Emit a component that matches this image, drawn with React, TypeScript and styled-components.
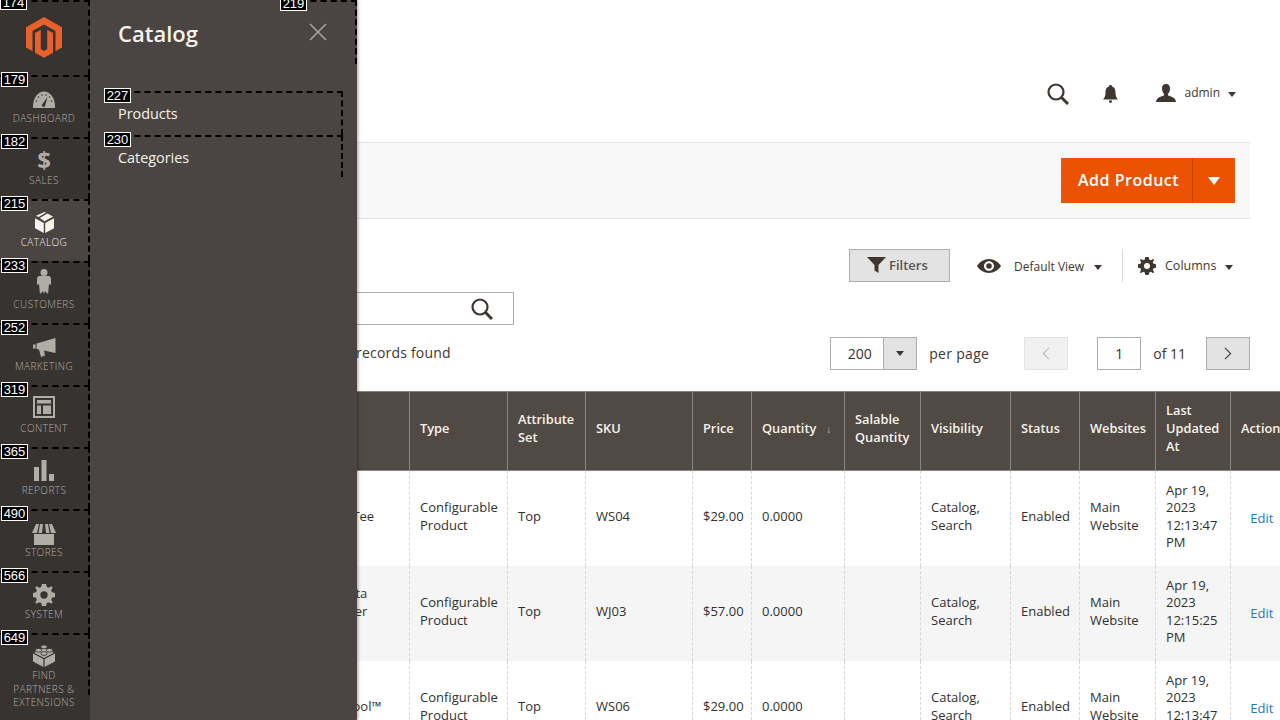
import React from "react";
import styled, { createGlobalStyle } from "styled-components";

const Global = createGlobalStyle`
  html, body { margin: 0; padding: 0; overflow: hidden; background: #fff; }
  * { box-sizing: border-box; }
  body { font-family: "Open Sans", "Liberation Sans", sans-serif; color: #303030; }
`;

const Root = styled.div`
  position: relative;
  display: flex;
  width: 1280px;
  height: 720px;
  overflow: hidden;
  background: #fff;
`;

const Nav = styled.nav`
  position: relative;
  z-index: 3;
  flex: none;
  width: 90px;
  margin-right: -2px;
  height: 720px;
  overflow: hidden;
  background: #373330;
`;

const Tag = styled.span<{ $left?: number; $top?: number }>`
  position: absolute;
  z-index: 5;
  left: ${(p) => p.$left ?? 0}px;
  top: ${(p) => p.$top ?? -5}px;
  width: 27px;
  height: 15px;
  border: 1px solid #fff;
  background: #000;
  color: #fff;
  font: 13px/13px "Liberation Sans", Arial, sans-serif;
  text-align: center;
`;

const LogoCell = styled.div`
  position: relative;
  height: 75px;
  padding-top: 15px;
  border-top: 2px dashed #000;
  border-right: 2px dashed #000;
  display: flex;
  justify-content: center;
  align-items: flex-start;
`;

const NavItem = styled.a<{ $active?: boolean }>`
  position: relative;
  display: flex;
  flex-direction: column;
  align-items: center;
  height: 62px;
  padding-top: 9px;
  border-top: 2px dashed #000;
  border-right: 2px dashed #000;
  background: ${(p) => (p.$active ? "#4a4542" : "transparent")};
  color: ${(p) => (p.$active ? "#f7f3eb" : "#b0aca6")};
`;

const NavIcon = styled.span<{ $shift?: number }>`
  display: flex;
  align-items: center;
  justify-content: center;
  height: 24px;
  color: inherit;
  transform: translateY(${(p) => p.$shift ?? 0}px);
`;

const Dollar = styled.span`
  font: 700 24px/24px "Open Sans", sans-serif;
`;

const NavLabel = styled.span`
  margin-top: 2px;
  max-width: 68px;
  font-size: 10px;
  font-weight: 300;
  line-height: 13.5px;
  letter-spacing: 0.45px;
  text-transform: uppercase;
  text-align: center;
  color: inherit;
`;

const Flyout = styled.aside`
  position: absolute;
  z-index: 2;
  left: 88px;
  top: 0;
  width: 269px;
  height: 720px;
  background: #4a4542;
  box-shadow: 1px 0 3px rgba(0, 0, 0, 0.35);
`;

const FlyTitle = styled.h2`
  margin: 0;
  padding: 18px 0 0 30px;
  height: 91px;
  font-size: 22px;
  line-height: 30px;
  font-weight: 600;
  color: #f7f3eb;
`;

const CloseBox = styled.div`
  position: absolute;
  right: 0;
  top: 0;
  width: 77px;
  height: 64px;
  border-top: 2px dashed #000;
  border-right: 2px dashed #000;
  display: flex;
  align-items: flex-start;
  justify-content: center;
  padding-top: 20px;
  color: #aaa6a0;
`;

const FlyList = styled.div`
  margin-left: 16px;
  width: 239px;
`;

const FlyLink = styled.a`
  position: relative;
  display: block;
  height: 44px;
  padding: 11px 0 0 14px;
  border-top: 2px dashed #000;
  border-right: 2px dashed #000;
  font-size: 14.4px;
  line-height: 20px;
  color: #f7f3eb;
  &:last-child {
    height: 42px;
  }
`;

const Main = styled.main`
  flex: none;
  width: 1162px;
`;

const TopBar = styled.header`
  height: 142px;
  display: flex;
  justify-content: flex-end;
  align-items: center;
  padding: 44px 14px 0 0;
  color: #41362f;
`;

const TopIcon = styled.span<{ $gap: number }>`
  display: flex;
  padding-top: 2px;
  margin-right: ${(p) => p.$gap}px;
`;

const UserName = styled.span`
  margin-left: 8px;
  font-size: 12px;
  line-height: 18px;
  color: #41362f;
`;

const Caret = styled.span<{ $ml?: number; $mt?: number }>`
  display: inline-block;
  margin-left: ${(p) => p.$ml ?? 8}px;
  margin-top: ${(p) => p.$mt ?? 0}px;
  width: 0;
  height: 0;
  border-left: 4px solid transparent;
  border-right: 4px solid transparent;
  border-top: 5px solid #41362f;
`;

const ActionBand = styled.section`
  height: 77px;
  padding: 15px 15px 0 0;
  display: flex;
  justify-content: flex-end;
  background: #f8f8f8;
  border-top: 1px solid #e3e3e3;
  border-bottom: 1px solid #e3e3e3;
`;

const AddButton = styled.div`
  display: flex;
  width: 174px;
  height: 45px;
  background: #eb5202;
  color: #fff;
`;

const AddLabel = styled.span`
  width: 132px;
  padding-left: 17px;
  border-right: 1px solid #c64600;
  font-size: 16px;
  font-weight: 600;
  letter-spacing: 0.5px;
  line-height: 44px;
  white-space: nowrap;
`;

const AddArrow = styled.span`
  flex: 1;
  display: flex;
  align-items: center;
  justify-content: center;
  &::after {
    content: "";
    border-left: 6px solid transparent;
    border-right: 6px solid transparent;
    border-top: 8px solid #fff;
  }
`;

const Tools = styled.div`
  padding: 30px 0 0 30px;
`;

const ToolRow = styled.div`
  display: flex;
  justify-content: flex-end;
  align-items: center;
  height: 33px;
`;

const FilterBtn = styled.div`
  width: 101px;
  height: 33px;
  display: flex;
  align-items: center;
  padding: 0 0 1px 17px;
  gap: 3px;
  background: #e3e3e3;
  border: 1px solid #adadad;
  color: #5c534c;
  font-size: 13px;
  font-weight: 600;
`;

const ViewSwitch = styled.div`
  width: 173px;
  display: flex;
  align-items: center;
  padding-left: 27px;
  color: #41362f;
  font-size: 12px;
  border-right: 1px solid #d9d9d9;
  height: 33px;
`;

const ViewText = styled.span`
  margin: 2px 0 0 13px;
`;

const ColumnsSwitch = styled.div`
  width: 127px;
  display: flex;
  align-items: center;
  padding-left: 15px;
  color: #41362f;
  font-size: 12.5px;
`;

const ColText = styled.span`
  margin-left: 9px;
`;

const SearchBox = styled.div`
  width: 396px;
  height: 33px;
  margin-top: 10px;
  border: 1px solid #adadad;
  display: flex;
  justify-content: flex-end;
  align-items: center;
  padding-right: 20px;
  color: #41362f;
`;

const PagerRow = styled.div`
  display: flex;
  align-items: center;
  height: 33px;
  margin-top: 12px;
`;

const Records = styled.span`
  margin-left: 238px;
  font-size: 14px;
  letter-spacing: 0.2px;
  position: relative;
  top: -1px;
  color: #41362f;
`;

const Select = styled.div`
  margin-left: auto;
  width: 87px;
  height: 33px;
  display: flex;
  border: 1px solid #adadad;
`;

const SelectValue = styled.span`
  flex: 1;
  text-align: center;
  padding-left: 5px;
  font-size: 14px;
  line-height: 31px;
`;

const SelectArrow = styled.span`
  width: 33px;
  background: #e3e3e3;
  border-left: 1px solid #adadad;
  display: flex;
  align-items: center;
  justify-content: center;
`;

const PerPage = styled.span`
  margin: 0 35px 0 12px;
  font-size: 14px;
  letter-spacing: 0.3px;
  color: #41362f;
`;

const PageBtn = styled.span<{ $off?: boolean }>`
  width: 44px;
  height: 33px;
  display: flex;
  align-items: center;
  justify-content: center;
  background: ${(p) => (p.$off ? "#f0f0f0" : "#e3e3e3")};
  border: 1px solid ${(p) => (p.$off ? "#e3e3e3" : "#adadad")};
  color: ${(p) => (p.$off ? "#c2c2c2" : "#514943")};
`;

const PageInput = styled.span`
  margin-left: 29px;
  width: 44px;
  height: 33px;
  border: 1px solid #adadad;
  text-align: center;
  font-size: 14px;
  line-height: 31px;
`;

const PageOf = styled.span`
  margin: 0 20px 0 12px;
  font-size: 14px;
  color: #41362f;
`;

const Table = styled.table`
  margin: 21px 0 0 217px;
  width: 989px;
  table-layout: fixed;
  border-collapse: collapse;
  font-size: 13px;
  line-height: 17.5px;
`;

const Th = styled.th`
  padding: 9px 10px 15px;
  height: 79px;
  background: #514943;
  border: 1px solid #8a837f;
  border-right: none;
  color: #f7f3eb;
  font-weight: 600;
  font-size: 12.8px;
  line-height: 18px;
  text-align: left;
  vertical-align: middle;
  white-space: normal;
`;

const SortMark = styled.span`
  margin-left: 10px;
  font-size: 10px;
  font-weight: 400;
  color: #c9c6c3;
`;

const Row = styled.tr<{ $alt?: boolean }>`
  background: ${(p) => (p.$alt ? "#f5f5f5" : "#fff")};
`;

const Td = styled.td`
  padding: 10.5px 10px 13.5px;
  height: 95px;
  border-left: 1px dashed #d6d6d6;
  vertical-align: middle;
  color: #303030;
  overflow-wrap: normal;
`;

const NameCell = styled(Td)`
  padding-left: 12px;
`;

const EditCell = styled(Td)`
  padding: 11.5px 2px 10.5px 0;
  text-align: center;
  color: #1979c3;
`;

function Logo() {
  return (
    <svg width="36" height="41" viewBox="0 0 36 41">
      <path fill="#e8612a" d="M18 0 36 10.3V30.600L29.500 34.300V14L18 7.500 6.500 14V34.300L0 30.600V10.300Z" />
      <path fill="#e8612a" d="M18 40.800 9 35.800V16L14.800 12.700V32L18 34 21.200 32V12.700L27 16V35.800Z" />
    </svg>
  );
}

const Gauge = () => (
  <svg width="22" height="17" viewBox="0 0 22 17">
    <path fill="currentColor" d="M0 17C-.5 7 5 .5 11 .5S22.500 7 22 17Z" />
    <g fill="#373330">
      <circle cx="3.500" cy="10" r=".8" /><circle cx="5.500" cy="6" r=".8" /><circle cx="9" cy="4" r=".8" />
      <circle cx="13" cy="4" r=".8" /><circle cx="16.500" cy="6" r=".8" /><circle cx="18.500" cy="10" r=".8" />
      <path d="M14.500 6 12.300 14A1.700 1.700 0 1 1 9.500 13Z" />
    </g>
  </svg>
);

const Box = () => (
  <svg width="19" height="21" viewBox="0 0 19 21">
    <path fill="currentColor" d="M0 6.300 8.800 11V21L0 16.200ZM19 6.300 10.200 11V21L19 16.200Z" />
    <path fill="currentColor" d="M9.500 0 11 .8 3.500 5 1 3.800ZM12.500 1.600 18 4.500 9.500 9.300 4.800 6Z" />
  </svg>
);

const Person = () => (
  <svg width="14" height="25" viewBox="0 0 14 25">
    <circle cx="7" cy="3.500" r="3.500" fill="currentColor" />
    <path fill="currentColor" d="M2.500 7H11.500C13 7 14 8 14 10V16L12 15 11 25 8 22 7 25 6 22 3 25 2 15 0 16V10C0 8 1 7 2.500 7Z" />
  </svg>
);

const Horn = () => (
  <svg width="23" height="19" viewBox="0 0 23 19">
    <path fill="currentColor" d="M0 6.500H2.500V10.500H0ZM3.500 5.500 22.500 0V15L11 12.500 12 17.500 8 19 6 11.500 3.500 11Z" />
  </svg>
);

const ContentIcon = () => (
  <svg width="22" height="22" viewBox="0 0 22 22">
    <path fill="currentColor" fillRule="evenodd" d="M0 0H22V22H0ZM2 2V20H20V2Z" />
    <path fill="currentColor" d="M4 4H18V7.500H4ZM4 9.500H8V18H4ZM10 9.500H18V18H10Z" />
  </svg>
);

const Bars = () => (
  <svg width="20" height="21" viewBox="0 0 20 21">
    <path fill="currentColor" d="M0 7H5V21H0ZM7.500 0H12.500V21H7.500ZM15 14H20V21H15Z" />
  </svg>
);

const Store = () => (
  <svg width="24" height="21" viewBox="0 0 24 21">
    <path fill="currentColor" d="M4 0H7L5 9H0ZM8 0H11L10 9H6.500ZM13 0H16L17.500 9H14ZM17 0H20L24 9H19ZM2 10H22V21H2Z" />
  </svg>
);

const Cog = ({ size }: { size: number }) => (
  <svg width={size} height={size} viewBox="0 0 24 24">
    <path
      fill="currentColor"
      fillRule="evenodd"
      d="M9.800 0H14.200L15 3.300 17.200 4.200 20.100 2.500 21.500 3.900 19.800 6.800 20.700 9 24 9.800V14.200L20.700 15 19.800 17.200 21.500 20.100 20.100 21.500 17.200 19.800 15 20.700 14.200 24H9.800L9 20.700 6.800 19.800 3.900 21.500 2.500 20.100 4.200 17.200 3.300 15 0 14.200V9.800L3.300 9 4.200 6.800 2.500 3.900 3.900 2.500 6.800 4.200 9 3.300ZM12 8A4 4 0 1 0 12 16 4 4 0 1 0 12 8Z"
    />
  </svg>
);

const Brick = () => (
  <svg width="22" height="23" viewBox="0 0 22 23">
    <path fill="currentColor" d="M0 9.500 10.400 15V23L0 17.500ZM22 9.500 11.600 15V23L22 17.500Z" />
    <path fill="currentColor" d="M11 4 21 8.800 11 14 1 8.800Z" />
    <g fill="currentColor" stroke="#373330" strokeWidth=".8">
      <ellipse cx="11" cy="2.800" rx="3.200" ry="1.900" />
      <ellipse cx="5.500" cy="6.300" rx="3.200" ry="1.900" />
      <ellipse cx="16.500" cy="6.300" rx="3.200" ry="1.900" />
      <ellipse cx="11" cy="9.500" rx="3.200" ry="1.900" />
    </g>
  </svg>
);

const Magnifier = ({ size }: { size: number }) => (
  <svg width={size} height={size} viewBox="0 0 22 22" fill="none" stroke="currentColor">
    <circle cx="9" cy="9" r="7.500" strokeWidth="2.200" />
    <path d="M14.500 14.500 21 21" strokeWidth="3" />
  </svg>
);

const Bell = () => (
  <svg width="15" height="18" viewBox="0 0 15 18">
    <path fill="currentColor" d="M7.500 0C8.500 0 9 .7 9 1.500 12 2.500 12.500 5 12.500 8 12.500 11 13.500 13 15 14.500H0C1.500 13 2.500 11 2.500 8 2.500 5 3 2.500 6 1.500 6 .7 6.500 0 7.500 0ZM5.800 15.500H9.200C9 17 8.500 18 7.500 18S6 17 5.800 15.500Z" />
  </svg>
);

const User = () => (
  <svg width="20" height="18" viewBox="0 0 20 18">
    <path fill="currentColor" d="M10 0C13 0 14 2.200 14 4.500 14 7 13 9 12 10V11.500C14.500 12.500 19.500 13 20 18H0C.5 13 5.500 12.500 8 11.500V10C7 9 6 7 6 4.500 6 2.200 7 0 10 0Z" />
  </svg>
);

const Funnel = () => (
  <svg width="19" height="16" viewBox="0 0 19 16">
    <path fill="#41362f" d="M0 0H19L11.500 8V16L7.500 13.500V8Z" />
  </svg>
);

const Eye = () => (
  <svg width="24" height="14" viewBox="0 0 24 14">
    <path fill="#41362f" fillRule="evenodd" d="M12 0C17 0 21.500 3 24 7 21.500 11 17 14 12 14S2.500 11 0 7C2.500 3 7 0 12 0ZM12 2.200C9.200 2.200 7 4.400 7 7S9.200 11.800 12 11.800 17 9.600 17 7 14.800 2.200 12 2.200Z" />
    <circle cx="12" cy="7" r="2.800" fill="#41362f" />
  </svg>
);

const Chevron = ({ flip }: { flip?: boolean }) => (
  <svg width="8" height="13" viewBox="0 0 9 15" fill="none" stroke="currentColor" strokeWidth="1.500">
    <path d={flip ? "M8 1 1.500 7.500 8 14" : "M1 1 7.500 7.500 1 14"} />
  </svg>
);

const Cross = () => (
  <svg width="20" height="20" viewBox="0 0 20 20" stroke="currentColor" strokeWidth="1.500">
    <path d="M2 2 18 18M18 2 2 18" />
  </svg>
);

const navItems = [
  { id: 179, label: "Dashboard", icon: <Gauge />, shift: 1 },
  { id: 182, label: "Sales", icon: <Dollar>$</Dollar>, shift: 0 },
  { id: 215, label: "Catalog", icon: <Box />, active: true, shift: 0 },
  { id: 233, label: "Customers", icon: <Person />, shift: -3 },
  { id: 252, label: "Marketing", icon: <Horn />, shift: 1 },
  { id: 319, label: "Content", icon: <ContentIcon />, shift: -1 },
  { id: 365, label: "Reports", icon: <Bars />, shift: 0 },
  { id: 490, label: "Stores", icon: <Store />, shift: 2 },
  { id: 566, label: "System", icon: <Cog size={22} />, shift: 1 },
  { id: 649, label: "Find Partners & Extensions", icon: <Brick />, shift: 0 },
];

const headers = [
  "Name",
  "Type",
  "Attribute Set",
  "SKU",
  "Price",
  "Quantity",
  "Salable Quantity",
  "Visibility",
  "Status",
  "Websites",
  "Last Updated At",
  "Action",
];

const widths = [104, 98, 78, 107, 59, 93, 76, 90, 69, 76, 75, 64];

const rows = [
  { name: "Layla Tee", sku: "WS04", price: "$29.00", date: "Apr 19, 2023 12:13:47 PM" },
  { name: "Augusta Pullover Jacket", sku: "WJ03", price: "$57.00", date: "Apr 19, 2023 12:15:25 PM" },
  { name: "Elisa EverCool™ Tee", sku: "WS06", price: "$29.00", date: "Apr 19, 2023 12:13:47 PM" },
];

export default function App() {
  return (
    <>
      <Global />
      <Root>
        <Nav>
          <LogoCell>
            <Tag $top={-7}>174</Tag>
            <Logo />
          </LogoCell>
          {navItems.map((item) => (
            <NavItem key={item.id} $active={item.active}>
              <Tag $left={1} $top={-5}>{item.id}</Tag>
              <NavIcon $shift={item.shift}>{item.icon}</NavIcon>
              <NavLabel>{item.label}</NavLabel>
            </NavItem>
          ))}
        </Nav>
        <Flyout>
          <FlyTitle>Catalog</FlyTitle>
          <CloseBox>
            <Tag $left={0} $top={-6}>219</Tag>
            <Cross />
          </CloseBox>
          <FlyList>
            <FlyLink>
              <Tag $top={-5}>227</Tag>
              Products
            </FlyLink>
            <FlyLink>
              <Tag $top={-5}>230</Tag>
              Categories
            </FlyLink>
          </FlyList>
        </Flyout>
        <Main>
          <TopBar>
            <TopIcon $gap={34}><Magnifier size={22} /></TopIcon>
            <TopIcon $gap={38}><Bell /></TopIcon>
            <User />
            <UserName>admin</UserName>
            <Caret $mt={2} />
          </TopBar>
          <ActionBand>
            <AddButton>
              <AddLabel>Add Product</AddLabel>
              <AddArrow />
            </AddButton>
          </ActionBand>
          <Tools>
            <ToolRow>
              <FilterBtn><Funnel />Filters</FilterBtn>
              <ViewSwitch>
                <Eye />
                <ViewText>Default View</ViewText>
                <Caret $ml={10} $mt={3} />
              </ViewSwitch>
              <ColumnsSwitch>
                <Cog size={18} />
                <ColText>Columns</ColText>
                <Caret $ml={9} $mt={3} />
              </ColumnsSwitch>
            </ToolRow>
            <SearchBox><Magnifier size={22} /></SearchBox>
            <PagerRow>
              <Records>records found</Records>
              <Select>
                <SelectValue>200</SelectValue>
                <SelectArrow><Caret $ml={0} /></SelectArrow>
              </Select>
              <PerPage>per page</PerPage>
              <PageBtn $off><Chevron flip /></PageBtn>
              <PageInput>1</PageInput>
              <PageOf>of 11</PageOf>
              <PageBtn><Chevron /></PageBtn>
            </PagerRow>
          </Tools>
          <Table>
            <colgroup>
              {widths.map((w, i) => (
                <col key={i} style={{ width: w }} />
              ))}
            </colgroup>
            <thead>
              <tr>
                {headers.map((h) => (
                  <Th key={h}>
                    {h}
                    {h === "Quantity" && <SortMark>↓</SortMark>}
                  </Th>
                ))}
              </tr>
            </thead>
            <tbody>
              {rows.map((r, i) => (
                <Row key={r.sku} $alt={i % 2 === 1}>
                  <NameCell>{r.name}</NameCell>
                  <Td>Configurable Product</Td>
                  <Td>Top</Td>
                  <Td>{r.sku}</Td>
                  <Td>{r.price}</Td>
                  <Td>0.0000</Td>
                  <Td />
                  <Td>Catalog, Search</Td>
                  <Td>Enabled</Td>
                  <Td>Main Website</Td>
                  <Td>{r.date}</Td>
                  <EditCell>Edit</EditCell>
                </Row>
              ))}
            </tbody>
          </Table>
        </Main>
      </Root>
    </>
  );
}
